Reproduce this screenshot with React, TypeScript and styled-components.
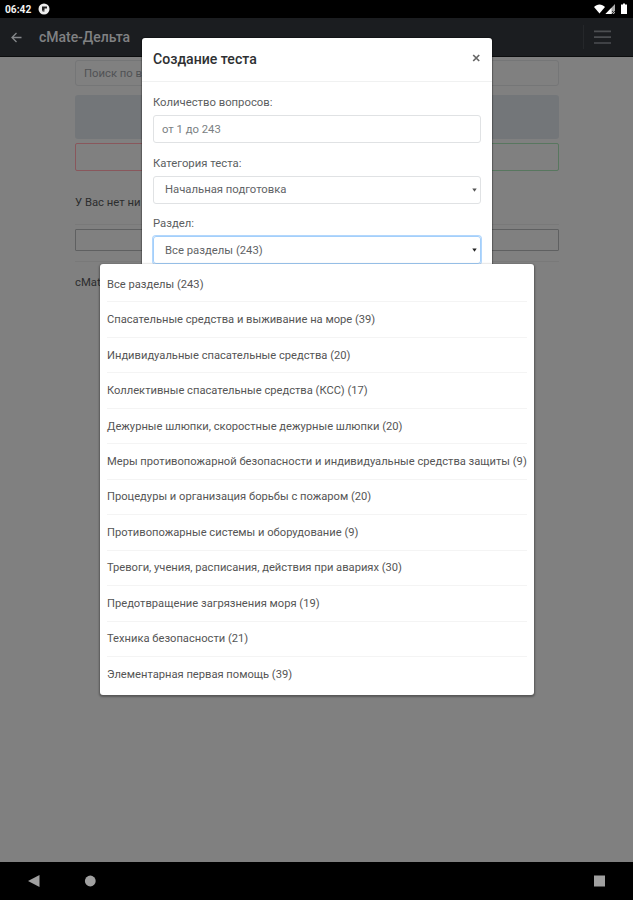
import React from "react";
import styled, { createGlobalStyle } from "styled-components";

const GlobalStyle = createGlobalStyle`
    * {
        box-sizing: border-box;
    }

    body {
        margin: 0;
        background-color: #808080;
        font-family: Roboto, "Liberation Sans", sans-serif;
        font-size: 11.3px;
        color: #5b5e61;
    }
`;

const Screen = styled.div`
    position: relative;
    height: 900px;
    display: flex;
    flex-direction: column;
    overflow: hidden;
`;

const StatusBar = styled.div`
    height: 18px;
    padding: 0 4px 0 5px;
    display: flex;
    align-items: center;
    justify-content: space-between;
    background-color: #000;
    color: #f2f2f2;
    font-size: 10.2px;
    font-weight: 700;
`;

const StatusGroup = styled.div<{ $gap: number }>`
    display: flex;
    align-items: center;
    gap: ${(props) => props.$gap}px;
`;

const AppBar = styled.div`
    height: 39px;
    padding-left: 11px;
    display: flex;
    align-items: center;
    background-color: #1b1d20;
    border-bottom: 1px solid #0c0d0e;
`;

const AppTitle = styled.span`
    margin-left: 17px;
    flex: 1;
    font-size: 14px;
    font-weight: 500;
    letter-spacing: -0.03px;
    color: #808183;
`;

const MenuButton = styled.div`
    height: 24px;
    width: 50px;
    padding-left: 10px;
    display: flex;
    align-items: center;
    border-left: 1px solid #25272a;
`;

const Page = styled.div`
    flex: 1;
    padding: 3px 74px 0 75px;
    display: flex;
    flex-direction: column;
    background-color: #808080;
    color: #2c2d2e;
`;

const SearchInput = styled.div`
    height: 26px;
    padding: 0 8px;
    display: flex;
    align-items: center;
    border: 1px solid #757677;
    border-radius: 3px;
    color: #505255;
`;

const InfoBlock = styled.div`
    height: 44px;
    margin-top: 9px;
    border-radius: 3px;
    background-color: #737679;
`;

const ButtonRow = styled.div`
    display: flex;
    margin-top: 4px;
`;

const OutlineButton = styled.div<{ $color: string; $side: "left" | "right" }>`
    flex: 1;
    height: 28px;
    border: 1px solid ${(props) => props.$color};
    border-radius: ${(props) => (props.$side === "left" ? "2px 0 0 2px" : "0 2px 2px 0")};
`;

const PageText = styled.div<{ $top: number }>`
    height: 16px;
    margin-top: ${(props) => props.$top}px;
    line-height: 16px;
`;

const PageDivider = styled.div<{ $top: number }>`
    height: 1px;
    margin-top: ${(props) => props.$top}px;
    background-color: #797979;
`;

const EmptyBox = styled.div`
    height: 22px;
    margin-top: 4px;
    border: 1px solid #5f6061;
    border-radius: 1px;
`;

const NavBar = styled.div`
    height: 38px;
    padding: 0 27px 0 28px;
    display: flex;
    align-items: center;
    background-color: #000;
`;

const NavSpacer = styled.div`
    flex: 1;
`;

const Modal = styled.div`
    position: absolute;
    top: 38px;
    left: 142px;
    width: 350px;
    height: 240px;
    background-color: #fff;
    border-radius: 3px;
    box-shadow: 0 0 1px 1px rgba(0, 0, 0, 0.3);
`;

const ModalHeader = styled.div`
    height: 44px;
    padding: 0 11px 3px;
    display: flex;
    align-items: center;
    justify-content: space-between;
    border-bottom: 1px solid #f0f1f1;
`;

const ModalTitle = styled.span`
    padding-top: 2px;
    font-size: 14.1px;
    font-weight: 500;
    color: #2e3032;
`;

const ModalBody = styled.div`
    padding: 13px 11px 0;
`;

const Label = styled.div`
    height: 16px;
    margin-bottom: 4px;
    line-height: 16px;
`;

const Field = styled.div<{ $focused?: boolean; $inset: number; $muted?: boolean }>`
    height: 28px;
    margin-bottom: 12.5px;
    padding: 0 3px 0 ${(props) => props.$inset}px;
    display: flex;
    align-items: center;
    justify-content: space-between;
    border: 1px solid ${(props) => (props.$focused ? "#a3cffb" : "#e0e2e4")};
    border-radius: 3px;
    box-shadow: ${(props) => (props.$focused ? "0 0 0 1px #b3d7fc" : "none")};
    color: ${(props) => (props.$muted ? "#7b7f83" : "#5f6366")};
`;

const OptionList = styled.div`
    position: absolute;
    top: 264px;
    left: 100px;
    width: 434px;
    height: 431px;
    padding: 3px 7px 0;
    background-color: #fff;
    border-radius: 3px;
    box-shadow: 0 1px 2px 1px rgba(0, 0, 0, 0.32);
`;

const Option = styled.div`
    height: 35.46px;
    display: flex;
    align-items: center;
    border-bottom: 1px solid #f4f4f4;
    color: #555;
    font-size: 11.17px;
    white-space: nowrap;

    &:last-child {
        border-bottom: 0;
    }
`;

const sections = [
    "Все разделы (243)",
    "Спасательные средства и выживание на море (39)",
    "Индивидуальные спасательные средства (20)",
    "Коллективные спасательные средства (КСС) (17)",
    "Дежурные шлюпки, скоростные дежурные шлюпки (20)",
    "Меры противопожарной безопасности и индивидуальные средства защиты (9)",
    "Процедуры и организация борьбы с пожаром (20)",
    "Противопожарные системы и оборудование (9)",
    "Тревоги, учения, расписания, действия при авариях (30)",
    "Предотвращение загрязнения моря (19)",
    "Техника безопасности (21)",
    "Элементарная первая помощь (39)",
];

function SelectArrow({ color }: { color: string }) {
    return (
        <svg width="5" height="4" viewBox="0 0 5 4">
            <path d="M0.3 0.4h4.4L2.5 3.8z" fill={color} />
        </svg>
    );
}

function StatusIcons() {
    return (
        <svg width="36" height="14" viewBox="0 0 36 14">
            <path d="M1 5C4 1.5 9 1.5 12 5L6.5 11.5z" fill="#fff" />
            <path d="M22 2v10H12.5z" fill="#aaa" />
            <path d="M18.5 5.7V12h-6z" fill="#fff" />
            <path d="M19 9l3 3m0-3l-3 3" stroke="#333" />
            <path d="M28 2.5h2V1.5h2v1h2V12h-6z" fill="#fff" />
        </svg>
    );
}

export default function App() {
    return (
        <Screen>
            <GlobalStyle />
            <StatusBar>
                <StatusGroup $gap={7}>
                    <span>06:42</span>
                    <svg width="12" height="12" viewBox="0 0 12 12">
                        <circle cx="6" cy="6" r="5.5" fill="#eee" />
                        <path d="M4 3.5h5v2H6.5v2.2H4z" fill="#222" />
                        <path d="M4.5 8.5h2" stroke="#888" />
                    </svg>
                </StatusGroup>
                <StatusIcons />
            </StatusBar>
            <AppBar>
                <svg width="11" height="11" viewBox="0 0 11 11" fill="none" stroke="#85878a" strokeWidth="1.3">
                    <path d="M10.5 5.5H1.2M5.5 1L1 5.5 5.5 10" />
                </svg>
                <AppTitle>cMate-Дельта</AppTitle>
                <MenuButton>
                    <svg width="18" height="16" viewBox="0 0 18 16" stroke="#4c4e51" strokeWidth="1.7">
                        <path d="M0 2.4h17M0 8.2h17M0 14h17" />
                    </svg>
                </MenuButton>
            </AppBar>
            <Page>
                <SearchInput>Поиск по вопросам</SearchInput>
                <InfoBlock />
                <ButtonRow>
                    <OutlineButton $color="#89575c" $side="left" />
                    <OutlineButton $color="#58775f" $side="right" />
                </ButtonRow>
                <PageText $top={24}>У Вас нет ни</PageText>
                <PageDivider $top={13} />
                <EmptyBox />
                <PageDivider $top={10} />
                <PageText $top={13}>cMate</PageText>
            </Page>
            <NavBar>
                <svg width="12" height="12" viewBox="0 0 12 12">
                    <path d="M0 6L11.5 0v12z" fill="#a0a0a0" />
                </svg>
                <svg width="56" height="12" viewBox="0 0 56 12">
                    <circle cx="50.3" cy="6" r="5.4" fill="#a0a0a0" />
                </svg>
                <NavSpacer />
                <svg width="12" height="12" viewBox="0 0 12 12">
                    <rect x="0" y="0.5" width="11" height="11" fill="#a0a0a0" />
                </svg>
            </NavBar>

            <Modal>
                <ModalHeader>
                    <ModalTitle>Создание теста</ModalTitle>
                    <svg width="9" height="9" viewBox="0 0 9 9" stroke="#666" strokeWidth="1.7">
                        <path d="M1.2 1l6 6M7.2 1l-6 6" />
                    </svg>
                </ModalHeader>
                <ModalBody>
                    <Label>Количество вопросов:</Label>
                    <Field $inset={8} $muted>
                        от 1 до 243
                    </Field>
                    <Label>Категория теста:</Label>
                    <Field $inset={11}>
                        Начальная подготовка
                        <SelectArrow color="#555" />
                    </Field>
                    <Label>Раздел:</Label>
                    <Field $inset={11} $focused>
                        Все разделы (243)
                        <SelectArrow color="#222" />
                    </Field>
                </ModalBody>
            </Modal>

            <OptionList>
                {sections.map((section) => (
                    <Option key={section}>{section}</Option>
                ))}
            </OptionList>
        </Screen>
    );
}
